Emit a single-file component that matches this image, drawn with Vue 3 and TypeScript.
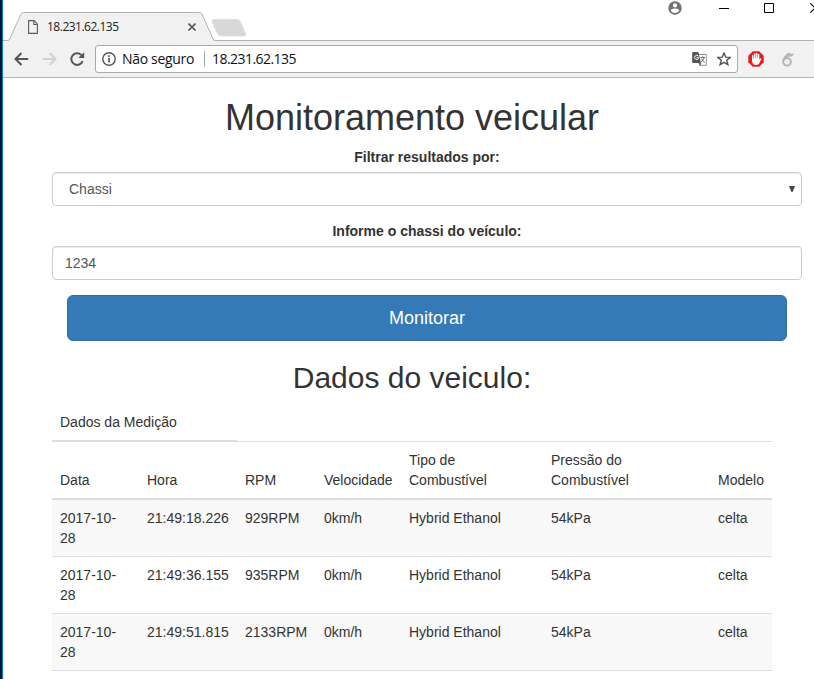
<script setup lang="ts">
import { ref } from 'vue'

interface Measurement {
  date: string
  time: string
  rpm: string
  speed: string
  fuel: string
  pressure: string
  model: string
}

const filterBy = ref('Chassi')
const chassis = ref('1234')
const columns: string[] = ['Data', 'Hora', 'RPM', 'Velocidade', 'Tipo de Combustível', 'Pressão do Combustível', 'Modelo']
const rows: Measurement[] = [
  { date: '2017-10-28', time: '21:49:18.226', rpm: '929RPM', speed: '0km/h', fuel: 'Hybrid Ethanol', pressure: '54kPa', model: 'celta' },
  { date: '2017-10-28', time: '21:49:36.155', rpm: '935RPM', speed: '0km/h', fuel: 'Hybrid Ethanol', pressure: '54kPa', model: 'celta' },
  { date: '2017-10-28', time: '21:49:51.815', rpm: '2133RPM', speed: '0km/h', fuel: 'Hybrid Ethanol', pressure: '54kPa', model: 'celta' },
]
</script>

<template>
  <div class="window">
    <header class="tabstrip">
      <div class="tab">
        <svg class="tab-shape" width="214" height="29" viewBox="0 0 214 29">
          <path d="M0 29V28.5H4.5Q6 28.5 6.8 27L18 2Q18.8.5 20.5.5H196.500Q198.200.5 199 2L210 27Q210.700 28.500 212 28.500H214V29Z" fill="#f1f1f1" />
          <path d="M0 28.5H4.500Q6 28.500 6.800 27L18 2Q18.800.5 20.500.5H196.500Q198.200.5 199 2L210 27Q210.700 28.500 212 28.500H214" fill="none" stroke="#b2b2b2" />
        </svg>
        <div class="tab-content">
          <svg width="10" height="14" viewBox="0 0 10 14" fill="none" stroke="#5a5a5a" stroke-width="1.1">
            <path d="M.6.600H6L9.400 4.200V13.400H.6ZM5.800.8V4.500H9.200" />
          </svg>
          <span class="tab-title">18.231.62.135</span>
          <svg class="tab-close" width="8" height="8" viewBox="0 0 8 8" stroke="#5a5a5a" stroke-width="1.6"><path d="M.5.500 7.500 7.500M7.500.5.500 7.500" /></svg>
        </div>
      </div>
      <svg class="new-tab" width="36" height="18" viewBox="0 0 36 18">
        <path d="M3 .5H26Q28.500.500 29.500 3L34.500 14.500Q35.300 17 33 17H10Q7.500 17 6.500 14.500L1.200 3Q.2.500 3 .5Z" fill="#d8d8d8" stroke="#e0e0e0" />
      </svg>
      <div class="controls">
        <svg width="14" height="14" viewBox="0 0 14 14"><circle cx="7" cy="7" r="6.700" fill="#717171" /><circle cx="7" cy="4.400" r="2.100" fill="#fff" /><path d="M2.700 9.800Q3.200 7.600 7 7.600T11.300 9.800Q9.700 12 7 12T2.700 9.800Z" fill="#fff" /></svg>
        <svg class="minimize" width="10" height="10" viewBox="0 0 10 10"><path d="M0 5.500H10" stroke="#000" /></svg>
        <svg class="maximize" width="10" height="10" viewBox="0 0 10 10"><path d="M.5.500H9.500V9.500H.5Z" fill="none" stroke="#000" /></svg>
        <svg class="close" width="10" height="10" viewBox="0 0 10 10"><path d="M.3.300 9.700 9.700M9.700.3.300 9.700" stroke="#000" stroke-width="1.100" /></svg>
      </div>
    </header>

    <nav class="toolbar">
      <svg class="back" width="15" height="14" viewBox="0 0 15 14" fill="none" stroke="#555" stroke-width="2"><path d="M14.200 7H2M7.500 1 1.500 7 7.500 13" /></svg>
      <svg class="forward" width="15" height="14" viewBox="0 0 15 14" fill="none" stroke="#d1d1d1" stroke-width="2"><path d="M.8 7H13M7.500 1 13.500 7 7.500 13" /></svg>
      <svg class="reload" width="15" height="14" viewBox="0 0 15 14"><path d="M12.600 9.100A5.800 5.800 0 1 1 11.200 2.900L12 3.700" fill="none" stroke="#555" stroke-width="2" /><path d="M14.200.2V6H8.300Z" fill="#555" /></svg>
      <div class="address">
        <svg class="info" width="14" height="14" viewBox="0 0 14 14"><circle cx="7" cy="7" r="6.200" fill="none" stroke="#555" stroke-width="1.400" /><path d="M7 6V10.500M7 3.200V4.900" stroke="#555" stroke-width="1.700" /></svg>
        <span class="insecure">Não seguro</span>
        <span class="divider"></span>
        <span class="url">18.231.62.135</span>
        <svg class="translate" width="15" height="14" viewBox="0 0 15 14">
          <path d="M6.500 2.500H14.300V13.300H8.500L6.500 10Z" fill="#fff" stroke="#777" stroke-width=".8" />
          <path d="M1 0H6.300L9 11H1Q.2 11 .2 10V1Q.2 0 1 0Z" fill="#555" />
          <path d="M6.300 4.100A2.100 2.100 0 1 0 6.400 6.600V5.600H4.600" fill="none" stroke="#fff" />
          <path d="M8.500 5.500H13M10.700 4.300V5.500M12.200 5.500Q11.500 8.800 8.800 10M9.400 6.500Q10.500 9 12.800 10.300M7 11H9L8 13.500Z" fill="none" stroke="#666" stroke-width=".9" />
        </svg>
        <svg class="star" width="14" height="14" viewBox="0 0 14 14"><path d="M7 1 8.700 5.100 13.200 5.400 9.700 8.300 10.900 12.700 7 10.300 3.100 12.700 4.300 8.300.8 5.400 5.300 5.100Z" fill="none" stroke="#555" stroke-width="1.400" /></svg>
      </div>
      <svg class="blocker" width="16" height="16" viewBox="0 0 16 16">
        <path d="M4.800.3H11.200L15.700 4.800V11.200L11.200 15.700H4.800L.3 11.200V4.800Z" fill="#e81c1c" />
        <path d="M4 8V4.600Q4.700 3.600 5.400 4.600V7.500H5.900V2.800Q6.700 1.800 7.400 2.800V7H7.900V2.300Q8.700 1.400 9.400 2.300V7H9.900V3.300Q10.600 2.400 11.300 3.300V8.800L12.200 7.500Q13.400 6.900 13.300 8L11.200 12.400Q10.200 14 8 14T4.800 12.500Q4 11 4 8Z" fill="#fff" />
      </svg>
      <svg class="six" width="12" height="15" viewBox="0 0 12 15">
        <circle cx="5" cy="9.800" r="3.800" fill="none" stroke="#b5b5b5" stroke-width="2" />
        <path d="M.3 9.500Q1.300 3.400 6.800.4L8.500 1.800Q5.300 4.300 4.300 7Z" fill="#b5b5b5" />
        <path d="M5.800 4.700Q7.300 1.200 12 1.500Q10.500 5.500 5.800 4.700Z" fill="#b5b5b5" />
      </svg>
    </nav>

    <main class="page">
      <h1>Monitoramento veicular</h1>
      <form class="form" @submit.prevent>
        <label for="filter">Filtrar resultados por:</label>
        <div class="select-wrap">
          <select id="filter" v-model="filterBy" class="field select"><option>Chassi</option></select>
          <svg class="arrow" width="6" height="6" viewBox="0 0 6 6"><path d="M0 0H6L3.500 6H2.500Z" fill="#444" /></svg>
        </div>
        <label for="chassis">Informe o chassi do veículo:</label>
        <input id="chassis" v-model="chassis" class="field" type="text" />
        <button class="submit" type="submit">Monitorar</button>
      </form>
      <h2>Dados do veiculo:</h2>
      <table>
        <colgroup><col class="c1" /><col class="c2" /><col class="c3" /><col class="c4" /><col class="c5" /><col class="c6" /><col class="c7" /></colgroup>
        <thead>
          <tr><th colspan="2">Dados da Medição</th><td class="rest" colspan="5"></td></tr>
          <tr><th v-for="c in columns" :key="c"><span class="head-text">{{ c }}</span></th></tr>
        </thead>
        <tbody>
          <tr v-for="r in rows" :key="r.time">
            <td>{{ r.date }}</td><td>{{ r.time }}</td><td>{{ r.rpm }}</td><td>{{ r.speed }}</td><td>{{ r.fuel }}</td><td>{{ r.pressure }}</td><td>{{ r.model }}</td>
          </tr>
        </tbody>
      </table>
    </main>
  </div>
</template>

<style>
body { margin: 0; overflow: hidden; background: #fff; }
</style>

<style scoped>
* { box-sizing: border-box; }
svg { display: block; flex: none; }
.window {
  height: 679px;
  padding-left: 3px;
  overflow: hidden;
  background: linear-gradient(to right, #001533 0 2px, #0078d7 2px 3px, #fff 3px);
  color: #333;
  font: 14px/20px "Liberation Sans", Arial, sans-serif;
}
.tabstrip {
  display: flex;
  height: 41px;
  padding-top: 12px;
  background: linear-gradient(#b2b2b2, #b2b2b2) 0 40px / 100% 1px no-repeat;
}
.tab { display: grid; width: 214px; height: 29px; flex: none; }
.tab-shape, .tab-content { grid-area: 1 / 1; }
.tab-content { display: flex; align-items: center; padding-left: 25px; height: 29px; }
.tab-title { margin-left: 9px; width: 73px; white-space: nowrap; font: 12px/16px "Open Sans", "Noto Sans", sans-serif; letter-spacing: -0.5px; color: #222; }
.tab-close { margin-left: 68px; }
.new-tab { margin: 7px 0 0 -6px; }
.controls { display: flex; align-items: flex-start; margin: -11px 0 0 421px; flex: none; }
.minimize { margin: 2px 0 0 37px; }
.maximize { margin: 2px 0 0 35px; }
.close { margin: 2px 0 0 36px; }
.toolbar {
  display: flex;
  align-items: center;
  height: 37px;
  padding-left: 11px;
  background: #f1f1f1;
  border-bottom: 1px solid #b5b5b5;
}
.forward { margin-left: 13px; }
.reload { margin-left: 13px; }
.address {
  display: flex;
  align-items: center;
  width: 643px;
  height: 28px;
  margin-left: 10px;
  padding: 0 6px;
  flex: none;
  background: #fff;
  border: 1px solid #a9a9a9;
  border-radius: 3px;
  font: 14px/20px "Open Sans", "Noto Sans", sans-serif;
  color: #111;
}
.insecure { width: 73px; margin-left: 6px; white-space: nowrap; letter-spacing: -0.32px; }
.divider { width: 1px; height: 16px; margin-left: 9px; background: #a6a6a6; }
.url { margin-left: 7px; width: 86px; white-space: nowrap; letter-spacing: -0.55px; }
.translate { margin-left: auto; }
.star { margin-left: 10px; }
.blocker { margin-left: 10px; }
.six { margin-left: 18px; }
.page { padding: 20px 42px 0 49px; }
h1, h2 { margin: 0; font-weight: 400; text-align: center; line-height: 1.1; }
h1 { height: 49px; font-size: 36px; }
h2 { height: 43px; margin-top: 20px; font-size: 30px; }
.form { display: flex; flex-direction: column; width: 750px; margin: 0; }
label { margin-bottom: 5px; text-align: center; font-weight: 700; }
.field {
  display: block;
  width: 100%;
  height: 34px;
  padding: 6px 12px;
  font: 14px/20px "Liberation Sans", Arial, sans-serif;
  color: #555;
  background: #fff;
  border: 1px solid #ccc;
  border-radius: 4px;
  box-shadow: inset 0 1px 1px rgba(0, 0, 0, .075);
  outline: none;
}
.select { appearance: none; padding-left: 16px; }
.select-wrap { position: relative; margin-bottom: 15px; }
.arrow { position: absolute; right: 7px; top: 14px; }
.submit {
  height: 46px;
  margin: 15px 15px 0;
  font: 18px/24px "Liberation Sans", Arial, sans-serif;
  color: #fff;
  background: #337ab7;
  border: 1px solid #2e6da4;
  border-radius: 6px;
}
table { width: 720px; table-layout: fixed; border-collapse: separate; border-spacing: 0; }
.c1 { width: 87px; }
.c2 { width: 98px; }
.c3 { width: 79px; }
.c4 { width: 85px; }
.c5 { width: 142px; }
.c6 { width: 167px; }
.c7 { width: 62px; }
th, td { padding: 8px; text-align: left; font-weight: 400; }
th { vertical-align: bottom; border-bottom: 2px solid #ddd; }
td { vertical-align: top; border-bottom: 1px solid #ddd; }
.head-text { display: block; max-width: 84px; }
tbody tr:nth-child(odd) { background: #f9f9f9; }
</style>
